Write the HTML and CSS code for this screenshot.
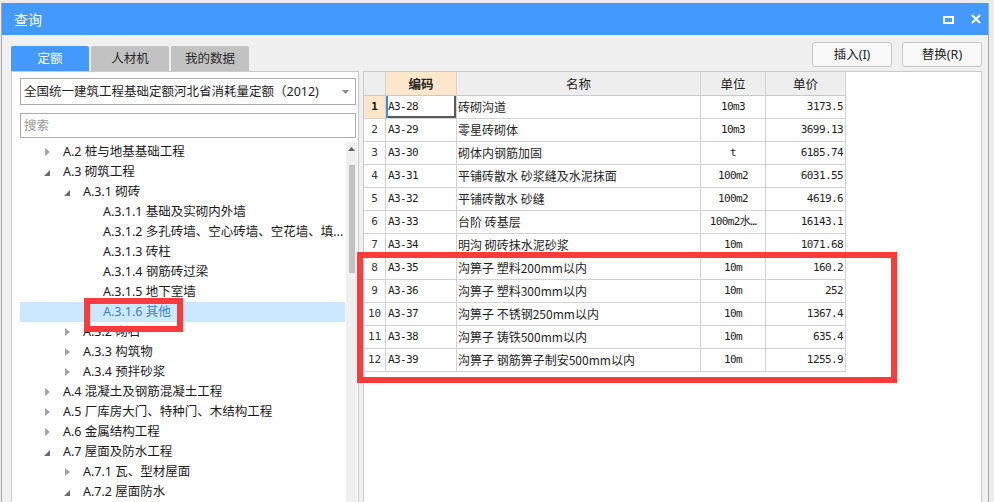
FILE: index.html
```html
<!DOCTYPE html>
<html lang="zh">
<head>
<meta charset="utf-8">
<title>查询</title>
<link rel="stylesheet" href="styles.css">
</head>
<body>
<div class="window">
  <div class="titlebar">
    <span class="title">查询</span>
    <div class="wctrls">
      <svg class="wbtn-max" width="11" height="8" viewBox="0 0 11 8"><rect x="1" y="1" width="9" height="6" fill="none" stroke="#fff" stroke-width="2"/><rect x="0" y="0" width="11" height="2" fill="#fff"/></svg>
      <svg class="wbtn-close" width="10" height="10" viewBox="0 0 10 10"><path d="M1 1 L9 9 M9 1 L1 9" stroke="#fff" stroke-width="2"/></svg>
    </div>
  </div>

  <div class="toolbar">
    <div class="tabs">
      <div class="tab active">定额</div>
      <div class="tab">人材机</div>
      <div class="tab">我的数据</div>
    </div>
    <div class="actions">
      <button class="btn">插入(I)</button>
      <button class="btn">替换(R)</button>
    </div>
  </div>

  <div class="main">
    <div class="left">
      <div class="select">
        <span>全国统一建筑工程基础定额河北省消耗量定额（2012)</span>
        <svg width="7" height="4" viewBox="0 0 7 4"><path d="M0 0 H7 L3.5 4 Z" fill="#8a8a8a"/></svg>
      </div>
      <div class="search">搜索</div>
      <div class="tree">
        <div class="tree-list">
          <div class="node l1"><i class="arr col"></i>A.2 桩与地基基础工程</div>
          <div class="node l1"><i class="arr exp"></i>A.3 砌筑工程</div>
          <div class="node l2"><i class="arr exp"></i>A.3.1 砌砖</div>
          <div class="node l3"><i class="arr"></i>A.3.1.1 基础及实砌内外墙</div>
          <div class="node l3"><i class="arr"></i>A.3.1.2 多孔砖墙、空心砖墙、空花墙、填...</div>
          <div class="node l3"><i class="arr"></i>A.3.1.3 砖柱</div>
          <div class="node l3"><i class="arr"></i>A.3.1.4 钢筋砖过梁</div>
          <div class="node l3"><i class="arr"></i>A.3.1.5 地下室墙</div>
          <div class="node l3 sel"><i class="arr"></i>A.3.1.6 其他</div>
          <div class="node l2"><i class="arr col"></i>A.3.2 砌石</div>
          <div class="node l2"><i class="arr col"></i>A.3.3 构筑物</div>
          <div class="node l2"><i class="arr col"></i>A.3.4 预拌砂浆</div>
          <div class="node l1"><i class="arr col"></i>A.4 混凝土及钢筋混凝土工程</div>
          <div class="node l1"><i class="arr col"></i>A.5 厂库房大门、特种门、木结构工程</div>
          <div class="node l1"><i class="arr col"></i>A.6 金属结构工程</div>
          <div class="node l1"><i class="arr exp"></i>A.7 屋面及防水工程</div>
          <div class="node l2"><i class="arr col"></i>A.7.1 瓦、型材屋面</div>
          <div class="node l2"><i class="arr exp"></i>A.7.2 屋面防水</div>
        </div>
        <div class="vscroll">
          <svg class="sc-up" width="7" height="4" viewBox="0 0 7 4"><path d="M0 4 H7 L3.5 0 Z" fill="#606060"/></svg>
          <div class="thumb"></div>
        </div>
      </div>
    </div>

    <div class="right">
      <div class="grid">
        <div class="row head">
          <div class="c num"></div>
          <div class="c code hl">编码</div>
          <div class="c name">名称</div>
          <div class="c unit">单位</div>
          <div class="c price">单价</div>
        </div>
        <div class="row">
          <div class="c num hl">1</div><div class="c code focus">A3-28</div><div class="c name">砖砌沟道</div><div class="c unit">10m3</div><div class="c price">3173.5</div>
        </div>
        <div class="row">
          <div class="c num">2</div><div class="c code">A3-29</div><div class="c name">零星砖砌体</div><div class="c unit">10m3</div><div class="c price">3699.13</div>
        </div>
        <div class="row">
          <div class="c num">3</div><div class="c code">A3-30</div><div class="c name">砌体内钢筋加固</div><div class="c unit">t</div><div class="c price">6185.74</div>
        </div>
        <div class="row">
          <div class="c num">4</div><div class="c code">A3-31</div><div class="c name">平铺砖散水 砂浆缝及水泥抹面</div><div class="c unit">100m2</div><div class="c price">6031.55</div>
        </div>
        <div class="row">
          <div class="c num">5</div><div class="c code">A3-32</div><div class="c name">平铺砖散水 砂缝</div><div class="c unit">100m2</div><div class="c price">4619.6</div>
        </div>
        <div class="row">
          <div class="c num">6</div><div class="c code">A3-33</div><div class="c name">台阶 砖基层</div><div class="c unit">100m2水…</div><div class="c price">16143.1</div>
        </div>
        <div class="row">
          <div class="c num">7</div><div class="c code">A3-34</div><div class="c name">明沟 砌砖抹水泥砂浆</div><div class="c unit">10m</div><div class="c price">1071.68</div>
        </div>
        <div class="row">
          <div class="c num">8</div><div class="c code">A3-35</div><div class="c name">沟箅子 塑料200mm以内</div><div class="c unit">10m</div><div class="c price">160.2</div>
        </div>
        <div class="row">
          <div class="c num">9</div><div class="c code">A3-36</div><div class="c name">沟箅子 塑料300mm以内</div><div class="c unit">10m</div><div class="c price">252</div>
        </div>
        <div class="row">
          <div class="c num">10</div><div class="c code">A3-37</div><div class="c name">沟箅子 不锈钢250mm以内</div><div class="c unit">10m</div><div class="c price">1367.4</div>
        </div>
        <div class="row">
          <div class="c num">11</div><div class="c code">A3-38</div><div class="c name">沟箅子 铸铁500mm以内</div><div class="c unit">10m</div><div class="c price">635.4</div>
        </div>
        <div class="row">
          <div class="c num">12</div><div class="c code">A3-39</div><div class="c name">沟箅子 钢筋箅子制安500mm以内</div><div class="c unit">10m</div><div class="c price">1255.9</div>
        </div>
      </div>
    </div>
  </div>

  <div class="mark mark-tree"></div>
  <div class="mark mark-table"></div>
</div>
</body>
</html>
```
FILE: styles.css
```css
* { box-sizing: border-box; }
html, body { margin: 0; padding: 0; }
body {
  background: #ececec;
  padding: 3px 0 0 1px;
  width: 994px;
  height: 502px;
  overflow: hidden;
  font-family: "Noto Sans", "Noto Sans CJK SC", sans-serif;
  font-size: 12px;
  color: #1e1e1e;
}
.window {
  position: relative;
  width: 988px;
  height: 499px;
  background: #f0f0f0;
  border-left: 1px solid #a9a9a9;
  border-right: 1px solid #a9a9a9;
  display: flex;
  flex-direction: column;
  overflow: hidden;
}
.titlebar {
  height: 32px;
  flex: none;
  background: #4499ff;
  display: flex;
  align-items: center;
  justify-content: space-between;
  padding: 0 7px 0 12px;
}
.title {
  color: #fff;
  font-size: 14px;
  line-height: 32px;
  font-family: "Noto Sans CJK SC", sans-serif;
}
.wctrls { display: flex; align-items: center; gap: 17px; }
.wbtn-max { display: block; margin-top: 1px; }
.wbtn-close { display: block; }

.toolbar {
  height: 36px;
  flex: none;
  display: flex;
  justify-content: space-between;
  align-items: flex-start;
  padding: 0 6px 0 9px;
}
.tabs { display: flex; gap: 2px; margin-top: 11px; }
.tab {
  width: 78px;
  height: 25px;
  line-height: 25px;
  text-align: center;
  background: #c2c2c2;
  color: #2a2a2a;
  border-radius: 2px 2px 0 0;
  font-size: 12.5px;
}
.tab.active { background: #4499ff; color: #fff; }
.actions { display: flex; gap: 10px; margin-top: 7px; }
.btn {
  width: 80px;
  height: 25px;
  border: 1px solid #c6c6c6;
  border-radius: 3px;
  background: #f9f9f9;
  font-family: "Noto Sans", "Noto Sans CJK SC", sans-serif;
  font-size: 12.5px;
  color: #222;
  padding: 0;
  line-height: 23px;
}

.main {
  display: flex;
  gap: 4px;
  padding-left: 9px;
  flex: 1;
  min-height: 0;
}
.left {
  width: 348px;
  background: #fff;
  border: 1px solid #c9c9c9;
  border-bottom: none;
  display: flex;
  flex-direction: column;
}
.select {
  margin: 6px 2px 0 8px;
  height: 27px;
  flex: none;
  border: 1px solid #ababab;
  display: flex;
  align-items: center;
  justify-content: space-between;
  padding: 0 6px 0 3px;
  font-size: 12.5px;
  line-height: 25px;
}
.select svg { display: block; }
.search {
  margin: 8px 2px 0 8px;
  height: 25px;
  flex: none;
  border: 1px solid #ababab;
  padding-left: 3px;
  line-height: 23px;
  color: #9a9a9a;
  font-size: 12.5px;
}
.tree {
  margin-top: 4px;
  display: flex;
  flex: 1;
  min-height: 0;
}
.tree-list {
  width: 325px;
  margin-left: 8px;
  margin-right: 1px;
}
.node {
  height: 20px;
  line-height: 20px;
  white-space: nowrap;
  display: flex;
  align-items: center;
  font-size: 12.5px;
  color: #1a1a1a;
}
.node.l1 { padding-left: 20px; }
.node.l2 { padding-left: 40px; }
.node.l3 { padding-left: 60px; }
.node.sel { background: #cce8ff; color: #3b7fd4; }
.arr {
  width: 23px;
  height: 20px;
  flex: none;
  position: relative;
}
.arr.col::before {
  content: "";
  position: absolute;
  left: 5px;
  top: 6px;
  border-left: 5px solid #a4a4a4;
  border-top: 4px solid transparent;
  border-bottom: 4px solid transparent;
}
.arr.exp::before {
  content: "";
  position: absolute;
  left: 4px;
  top: 8px;
  border-right: 6px solid #6a6a6a;
  border-top: 6px solid transparent;
}
.vscroll {
  width: 11px;
  background: #f0f0f0;
  display: flex;
  flex-direction: column;
  align-items: center;
}
.sc-up { display: block; margin-top: 5px; flex: none; }
.thumb {
  width: 6px;
  height: 108px;
  margin-top: 14px;
  flex: none;
  background: #c2c2c2;
}

.right {
  width: 619px;
  background: #fff;
  border: 1px solid #c9c9c9;
  border-bottom: none;
}
.grid { width: 482px; }
.row {
  display: grid;
  grid-template-columns: 22px 71px 244px 65px 80px;
  height: 23px;
}
.row.head { height: 24px; }
.c {
  border-right: 1px solid #d3d3d3;
  border-bottom: 1px solid #d3d3d3;
  line-height: 22px;
  white-space: nowrap;
  overflow: hidden;
  font-size: 12px;
}
.row .c.code,
.row .c.unit,
.row .c.price {
  font-family: "DejaVu Sans Mono", "Noto Sans CJK SC", monospace;
  font-size: 11px;
  letter-spacing: -0.6px;
}
.c.num {
  text-align: center;
  font-family: "DejaVu Sans Mono", monospace;
  font-size: 11px;
  color: #333;
}
.c.num.hl { background: #fde6c9; font-weight: bold; color: #111; }
.c.code { padding-left: 2px; }
.c.code.focus {
  box-shadow: inset 2px 0 0 #3d8de6, inset -2px -2px 0 #5a5a5a;
}
.c.name {
  padding-left: 1px;
  font-family: "Noto Sans CJK SC", sans-serif;
}
.c.unit { text-align: center; }
.c.price { text-align: right; padding-right: 2px; }
.row.head .c {
  background: #eeeeee;
  text-align: center;
  line-height: 23px;
  border-bottom-color: #c9c9c9;
  font-family: "Noto Sans CJK SC", sans-serif;
  font-size: 12.5px;
  letter-spacing: 0;
  padding: 0;
  color: #222;
}
.row.head .c.hl { background: #fde6c9; font-weight: bold; }

.mark {
  position: absolute;
  border: 6px solid #fd3b3b;
}
.mark-tree { left: 82px; top: 295px; width: 99px; height: 34px; }
.mark-table { left: 355px; top: 249px; width: 540px; height: 131px; }
```
